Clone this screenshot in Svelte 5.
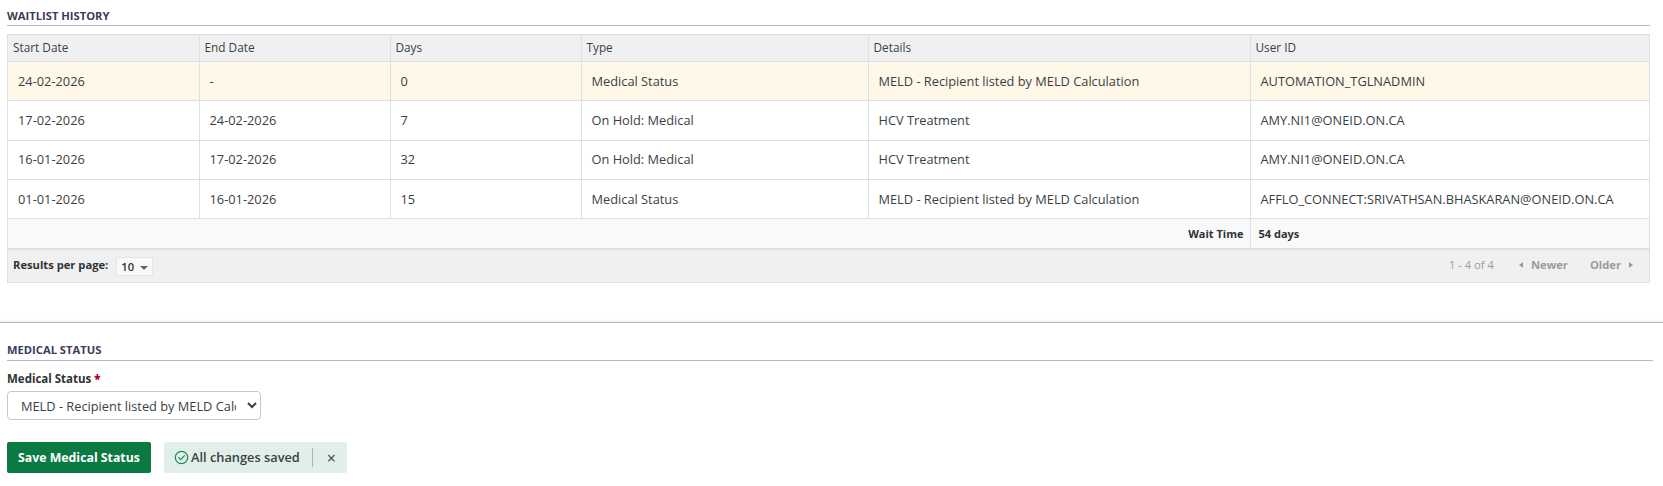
<script>
  const rows = [
    { start: '24-02-2026', end: '-', days: '0', type: 'Medical Status', details: 'MELD - Recipient listed by MELD Calculation', user: 'AUTOMATION_TGLNADMIN', current: true },
    { start: '17-02-2026', end: '24-02-2026', days: '7', type: 'On Hold: Medical', details: 'HCV Treatment', user: 'AMY.NI1@ONEID.ON.CA' },
    { start: '16-01-2026', end: '17-02-2026', days: '32', type: 'On Hold: Medical', details: 'HCV Treatment', user: 'AMY.NI1@ONEID.ON.CA' },
    { start: '01-01-2026', end: '16-01-2026', days: '15', type: 'Medical Status', details: 'MELD - Recipient listed by MELD Calculation', user: 'AFFLO_CONNECT:SRIVATHSAN.BHASKARAN@ONEID.ON.CA' }
  ];
</script>

<div class="page">
  <section class="history">
    <h2>WAITLIST HISTORY</h2>
    <div class="grid">
      <table>
        <colgroup>
          <col class="c1" /><col class="c2" /><col class="c3" /><col class="c4" /><col class="c5" /><col />
        </colgroup>
        <thead>
          <tr>
            <th>Start Date</th><th>End Date</th><th>Days</th><th>Type</th><th>Details</th><th>User ID</th>
          </tr>
        </thead>
        <tbody>
          {#each rows as r}
            <tr class:current={r.current}>
              <td>{r.start}</td><td>{r.end}</td><td>{r.days}</td><td>{r.type}</td><td>{r.details}</td><td>{r.user}</td>
            </tr>
          {/each}
        </tbody>
        <tfoot>
          <tr>
            <td colspan="5" class="wait-label">Wait Time</td>
            <td class="wait-value">54 days</td>
          </tr>
        </tfoot>
      </table>
      <div class="pager">
        <div class="per-page">
          <span>Results per page:</span>
          <span class="size">10 <i class="caret"></i></span>
        </div>
        <div class="nav">
          <span class="count">1 - 4 of 4</span>
          <span class="link newer"><i class="tri left"></i>Newer</span>
          <span class="link older">Older<i class="tri right"></i></span>
        </div>
      </div>
    </div>
  </section>

  <hr />

  <section class="status">
    <h2>MEDICAL STATUS</h2>
    <label for="ms">Medical Status <b>*</b></label>
    <select id="ms">
      <option>MELD - Recipient listed by MELD Calculation</option>
    </select>
    <div class="actions">
      <button class="save">Save Medical Status</button>
      <div class="saved">
        <svg width="15" height="15" viewBox="0 0 16 16" fill="none" stroke="#1f8a55" stroke-width="1.3">
          <circle cx="8" cy="8" r="6.6" />
          <path d="M5 8.2l2.1 2.1L11.2 6" stroke-linecap="round" stroke-linejoin="round" />
        </svg>
        <span class="msg">All changes saved</span>
        <span class="sep"></span>
        <span class="close">×</span>
      </div>
    </div>
  </section>
</div>

<style>
  :global(body) {
    margin: 0;
    background: #fff;
    font-family: "Open Sans", "Liberation Sans", sans-serif;
    color: #3a3f45;
  }
  .page { padding: 0 0 12px; }
  section { padding: 0 7px; }
  .history { padding-right: 13px; padding-top: 7px; }
  h2 {
    margin: 0;
    font-size: 11.2px;
    line-height: 18px;
    font-weight: 700;
    color: #3b3c5a;
    border-bottom: 1px solid #b4bac4;
  }
  .history h2 { height: 18px; }
  .grid {
    margin-top: 8px;
    border: 1px solid #dcdfe6;
    border-top: 0;
    background: #f0f0f0;
  }
  table {
    width: 100%;
    border-collapse: collapse;
    table-layout: fixed;
    font-size: 12.8px;
  }
  .c1 { width: 191px; }
  .c2 { width: 191px; }
  .c3 { width: 191px; }
  .c4 { width: 287px; }
  .c5 { width: 382px; }
  th {
    height: 27px;
    box-sizing: border-box;
    padding: 0 5px 2px;
    text-align: left;
    font-weight: 400;
    font-size: 11.8px;
    color: #3a3f45;
    background: #f0f0f0;
    border: 1px solid #dcdfe6;
    border-left: 0;
  }
  th:last-child, td:last-child { border-right: 0; }
  td {
    height: 39.3px;
    box-sizing: border-box;
    padding: 0 10px 1px;
    background: #fff;
    border: 1px solid #dcdfe6;
    border-left: 0;
  }
  tr.current td { background: #fff7e8; }
  tfoot td {
    height: 30px;
    padding-bottom: 0;
    background: #f9f9f9;
    font-size: 11px;
    font-weight: 700;
    color: #2f3336;
    border-bottom: 2px solid #dcdfe6;
  }
  .wait-label { text-align: right; padding-right: 6px; }
  .wait-value { padding-left: 8px; }
  .pager {
    height: 32px;
    box-sizing: border-box;
    display: flex;
    justify-content: space-between;
    align-items: center;
    padding: 0 16px 2px 5px;
    font-size: 11.2px;
  }
  .per-page {
    display: flex;
    align-items: center;
    gap: 8px;
    font-weight: 700;
    color: #2f3336;
  }
  .size {
    width: 37px;
    height: 19px;
    box-sizing: border-box;
    background: #f9f9f9;
    border: 1px solid #e6e6e6;
    padding-left: 4px;
    position: relative;
    line-height: 17px;
    font-weight: 600;
    margin-top: 4px;
  }
  .caret {
    position: absolute;
    right: 4px;
    top: 8px;
    border: 4px solid transparent;
    border-top-color: #666;
    border-bottom: 0;
  }
  .nav { display: flex; align-items: center; color: #9b9b9b; }
  .count { margin-right: 25px; }
  .link { font-weight: 700; display: flex; align-items: center; gap: 8px; }
  .older { margin-left: 22px; }
  .tri { border: 3px solid transparent; display: inline-block; }
  .tri.left { border-right: 4px solid #9b9b9b; border-left: 0; }
  .tri.right { border-left: 4px solid #9b9b9b; border-right: 0; }
  hr {
    margin: 39px 0 0;
    border: 0;
    border-top: 1px solid #b6babf;
    box-shadow: 0 -1px 2px rgba(0,0,0,.12);
  }
  .status { padding-right: 10px; padding-top: 18px; }
  .status h2 { height: 19px; }
  label {
    display: block;
    margin-top: 9px;
    font-size: 11.5px;
    line-height: 17px;
    font-weight: 700;
    color: #2f3336;
  }
  label b { color: #b00020; }
  select {
    display: block;
    margin-top: 4px;
    width: 254px;
    height: 29px;
    padding: 1px 8px 0 9px;
    font: 12.8px "Open Sans", sans-serif;
    color: #3a3f45;
    background: #fff;
    border: 1px solid #c3c8d0;
    border-radius: 4px;
  }
  .actions { display: flex; gap: 13px; margin-top: 22px; }
  .save {
    width: 144px;
    height: 31px;
    border: 0;
    border-radius: 2px;
    background: #0b7a42;
    color: #fff;
    font: 700 12.3px "Open Sans", sans-serif;
    padding: 0;
  }
  .saved {
    display: flex;
    align-items: center;
    width: 183px;
    height: 31px;
    box-sizing: border-box;
    padding-left: 10px;
    border-radius: 2px;
    background: #e1efe8;
    font-size: 12.8px;
    font-weight: 600;
    color: #3a3f45;
  }
  .msg { margin-left: 2px; }
  .sep { width: 1px; height: 19px; background: #aab5b0; margin-left: 12px; }
  .close { margin-left: 14px; font-size: 16px; font-weight: 400; padding-top: 1px; }
</style>
